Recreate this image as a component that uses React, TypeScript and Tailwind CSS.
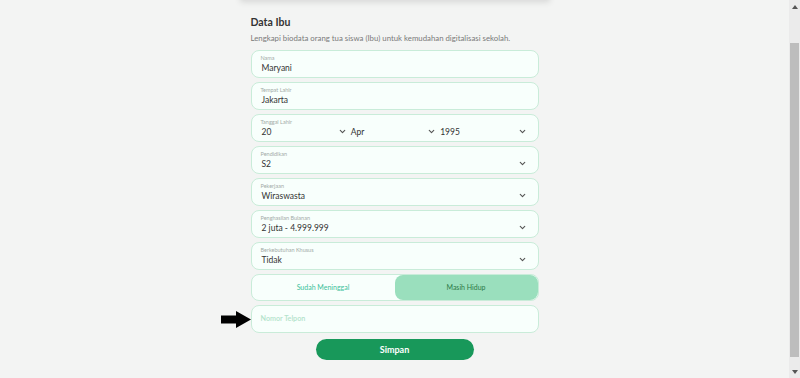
import React from "react";

const Chevron = () => (
  <svg width="9" height="9" viewBox="0 0 24 24" fill="none" stroke="#555" strokeWidth="3" strokeLinecap="round" strokeLinejoin="round">
    <path d="M6 9l6 6 6-6" />
  </svg>
);

const Field = ({ label, value, select }: { label: string; value: string; select?: boolean }) => (
  <div className="h-[28px] rounded-[8px] border border-[#c9ecd9] bg-[#f8fffc] pl-[9px] pr-[11px] flex flex-col justify-center">
    <div className="text-[5.5px] leading-[7px] text-[#a3aba7]">{label}</div>
    <div className="flex items-center justify-between">
      <span className="text-[8.5px] leading-[12px] text-[#333] pl-[1px]">{value}</span>
      {select && <Chevron />}
    </div>
  </div>
);

export default function App() {
  return (
    <div className="w-[800px] h-[378px] flex bg-[#f3f4f3] overflow-hidden" style={{ fontFamily: "Lato, 'Noto Sans', sans-serif" }}>
      <div className="flex-1 flex flex-col items-center">
        <div className="w-[310px] h-[10px] -mt-[10px] bg-white shadow-[0_2px_6px_rgba(0,0,0,0.12)]" />
        <div className="w-[288px] flex flex-col">
          <div className="mt-[15px] text-[10.5px] font-bold text-[#333] leading-[14px]">Data Ibu</div>
          <div className="mt-[3px] text-[7.8px] text-[#7a7a7a] leading-[12px]">
            Lengkapi biodata orang tua siswa (Ibu) untuk kemudahan digitalisasi sekolah.
          </div>
          <div className="mt-[6px] flex flex-col gap-[4px]">
            <Field label="Nama" value="Maryani" />
            <Field label="Tempat Lahir" value="Jakarta" />
            <div className="h-[28px] rounded-[8px] border border-[#c9ecd9] bg-[#f8fffc] pl-[9px] pr-[11px] flex flex-col justify-center">
              <div className="text-[5.5px] leading-[7px] text-[#a3aba7]">Tanggal Lahir</div>
              <div className="grid grid-cols-3 gap-[2px] text-[8.5px] leading-[12px] text-[#333]">
                <div className="flex items-center justify-between pl-[1px] pr-[1px]"><span>20</span><Chevron /></div>
                <div className="flex items-center justify-between pl-[1px] pr-[1px]"><span>Apr</span><Chevron /></div>
                <div className="flex items-center justify-between pl-[1px]"><span>1995</span><Chevron /></div>
              </div>
            </div>
            <Field label="Pendidikan" value="S2" select />
            <Field label="Pekerjaan" value="Wiraswasta" select />
            <Field label="Penghasilan Bulanan" value="2 juta - 4.999.999" select />
            <Field label="Berkebutuhan Khusus" value="Tidak" select />
            <div className="h-[27px] rounded-[8px] border border-[#c9ecd9] bg-[#f8fffc] flex">
              <div className="flex-1 flex items-center justify-center text-[7px] text-[#3cbf9b]">Sudah Meninggal</div>
              <div className="flex-1 flex items-center justify-center text-[7px] text-[#2b7a47] bg-[#9adfbd] rounded-[8px]">Masih Hidup</div>
            </div>
            <div className="relative h-[28px] rounded-[8px] border border-[#c9ecd9] bg-[#f8fffc] pl-[9px] flex items-center">
              <span className="text-[7.2px] font-semibold text-[#b3e3cb]">Nomor Telpon</span>
              <svg className="absolute left-[-31px] top-[5px]" width="30" height="17" viewBox="0 0 30 17">
                <path d="M0 4.5H15V0L30 8.5L15 17V12.5H0Z" fill="#000" />
              </svg>
            </div>
          </div>
          <div className="mt-[6px] flex justify-center">
            <button className="w-[158px] h-[21px] rounded-full bg-[#18985a] text-white text-[9px] font-bold">Simpan</button>
          </div>
        </div>
      </div>
      <div className="w-[11px] bg-[#ebebeb] flex flex-col items-center">
        <div className="h-[14px] flex items-center justify-center">
          <svg width="6" height="4" viewBox="0 0 6 4"><path d="M0 4L3 0L6 4Z" fill="#555" /></svg>
        </div>
        <div className="mt-[29px] w-[9px] h-[314px] bg-[#bdbdbd]" />
        <div className="flex-1 flex items-end pb-[4px]">
          <svg width="6" height="4" viewBox="0 0 6 4"><path d="M0 0L3 4L6 0Z" fill="#555" /></svg>
        </div>
      </div>
    </div>
  );
}
